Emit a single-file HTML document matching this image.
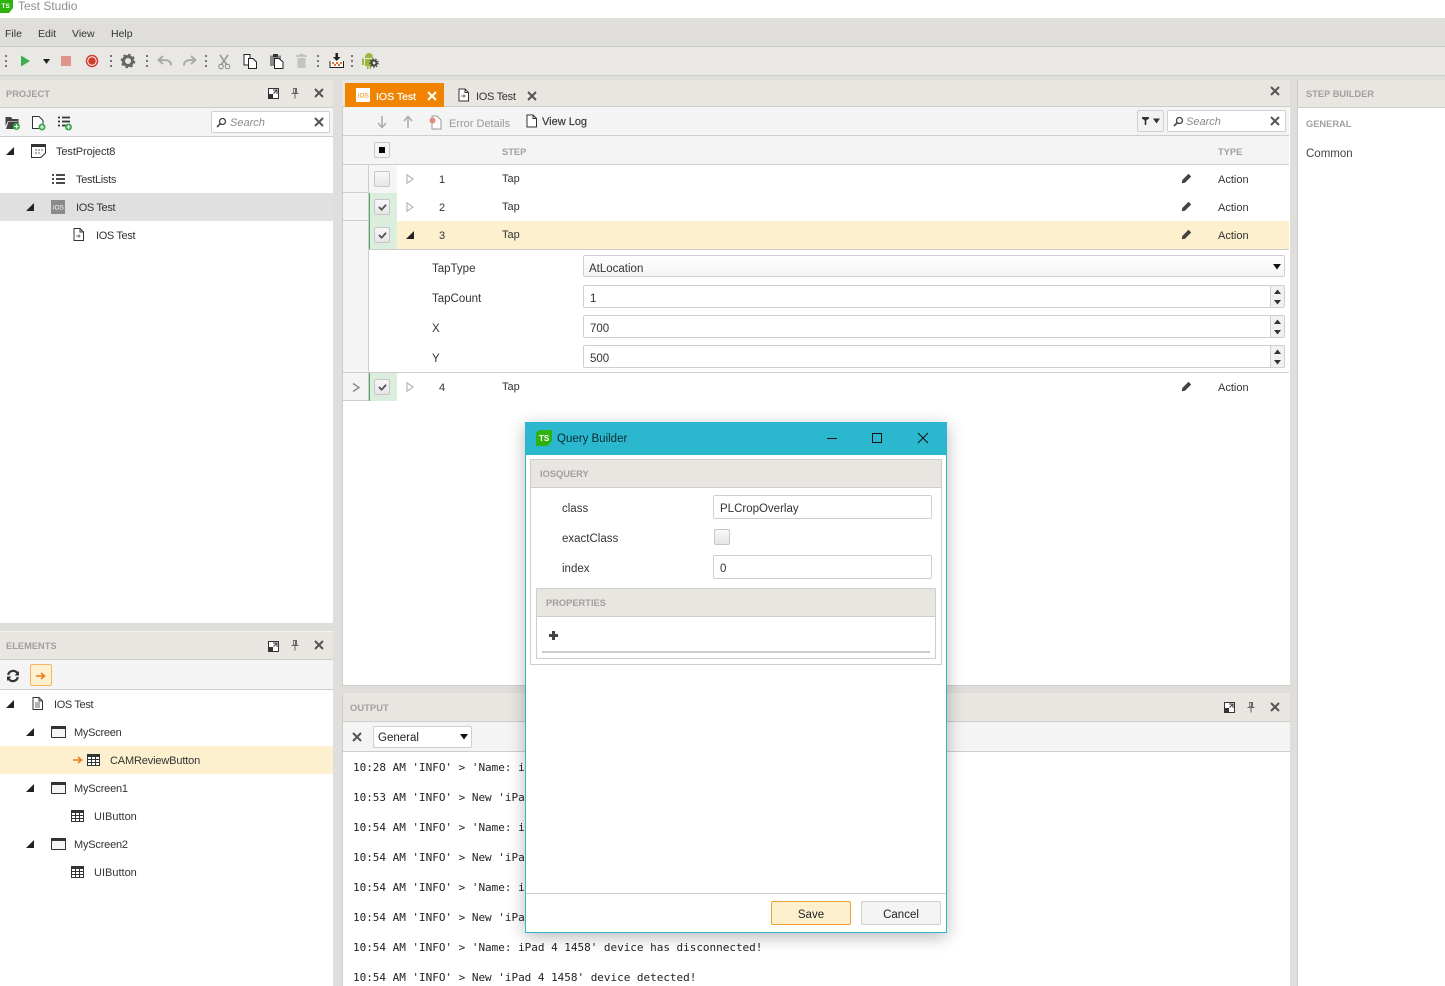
<!DOCTYPE html>
<html><head><meta charset="utf-8"><title>Test Studio</title>
<style>
html,body{margin:0;padding:0}
body{width:1445px;height:986px;position:relative;overflow:hidden;background:#dfdeda;font-family:"Liberation Sans",sans-serif;font-size:11px;color:#333}
.b{position:absolute;box-sizing:border-box}
.t{position:absolute;white-space:pre;line-height:14px;height:14px;margin-top:2px}
.h{font-weight:bold;font-size:9.3px;color:#a0a0a0;margin-top:1px}
.m{font-family:"DejaVu Sans Mono","Liberation Mono",monospace;font-size:11px;color:#222;letter-spacing:-.02px}
.i{position:absolute;overflow:visible}
.cb{position:absolute;box-sizing:border-box;width:16px;height:16px;border:1px solid #c6c6c6;border-radius:2px;background:linear-gradient(#f8f8f8,#e6e6e6)}
.inp{position:absolute;box-sizing:border-box;background:#fff;border:1px solid #cfcfcf;border-radius:2px}
</style></head>
<body>
<svg width="0" height="0" style="position:absolute">
<defs>
<symbol id="x" viewBox="0 0 10 10"><path d="M1 1L9 9M9 1L1 9" stroke="#555" stroke-width="2" fill="none"/></symbol>
<symbol id="tri" viewBox="0 0 8 8"><path d="M0 8L8 8L8 0Z" fill="#222"/></symbol>
<symbol id="open" viewBox="0 0 8 10"><path d="M1 .8L7 5L1 9.200Z" fill="#fff" stroke="#aaa"/></symbol>
<symbol id="chk" viewBox="0 0 10 8"><path d="M1 4L4 7L9 1.500" stroke="#555" stroke-width="2" fill="none"/></symbol>
<symbol id="pin" viewBox="0 0 10 12"><path d="M3 1H7V6H8.500V7H1.500V6H3ZM4.500 7H5.500V11.500H4.500Z" fill="#666"/><path d="M4.300 2V5.500" stroke="#fff"/></symbol>
<symbol id="pop" viewBox="0 0 11 11"><rect width="11" height="11" fill="#fff"/><rect x=".5" y=".5" width="10" height="10" fill="#fff" stroke="#333"/><rect x="1" y="6" width="4" height="4" fill="#333"/><path d="M5 2H9V6M9 2L5.500 5.500" stroke="#333" fill="none"/></symbol>
<symbol id="pencil" viewBox="0 0 11 11"><path d="M7.500 .8L10.200 3.500L4 9.700L.8 10.200L1.300 7Z" fill="#444"/></symbol>
<symbol id="grid" viewBox="0 0 13 12"><path d="M.5.5H12.500V11.500H.5Z" fill="#fff" stroke="#333"/><path d="M0 1H13V3H0Z" fill="#333"/><path d="M.5 5.500H12.500M.5 8.500H12.500M4.500 2V11.500M8.500 2V11.500" stroke="#333"/></symbol>
<symbol id="win" viewBox="0 0 15 12"><path d="M.5.5H14.500V11.500H.5Z" fill="#f4f4f4" stroke="#333"/><path d="M0 1H15V3H0Z" fill="#333"/></symbol>
<symbol id="doc" viewBox="0 0 11 13"><path d="M1 .5H7L10.500 4V12.500H1Z" fill="#fff" stroke="#333"/><path d="M7 .5V4H10.500" fill="none" stroke="#333"/></symbol>
</defs>
</svg>

<!-- title bar -->
<div class="b" style="left:0;top:0;width:1445px;height:18px;background:#fff"></div>
<svg class="i" style="left:0;top:0" width="13" height="13"><path d="M0 0H13V8L9 13H0Z" fill="#2eb20e"/><text x="1.500" y="8" font-size="6.500" font-weight="bold" fill="#fff" font-family="Liberation Sans">TS</text></svg>
<div class="t" style="left:18px;top:-3px;font-size:12px;color:#8e8e8e">Test Studio</div>

<!-- menu -->
<div class="b" style="left:0;top:18px;width:1445px;height:29px;background:#dfdeda;border-bottom:1px solid #c9c9c6"></div>
<div class="t" style="left:5px;top:25px;font-size:10.500px">File</div>
<div class="t" style="left:38px;top:25px;font-size:10.500px">Edit</div>
<div class="t" style="left:72px;top:25px;font-size:10.500px">View</div>
<div class="t" style="left:111px;top:25px;font-size:10.500px">Help</div>

<!-- toolbar -->
<div class="b" style="left:0;top:47px;width:1445px;height:29px;background:#e9e8e4;border-bottom:1px solid #cfcfcc"></div>
<svg class="i" style="left:0;top:47px" width="400" height="29">
<g fill="#777"><rect x="5" y="8" width="2" height="2"/><rect x="5" y="13" width="2" height="2"/><rect x="5" y="18" width="2" height="2"/>
<rect x="110" y="8" width="2" height="2"/><rect x="110" y="13" width="2" height="2"/><rect x="110" y="18" width="2" height="2"/>
<rect x="146" y="8" width="2" height="2"/><rect x="146" y="13" width="2" height="2"/><rect x="146" y="18" width="2" height="2"/>
<rect x="205" y="8" width="2" height="2"/><rect x="205" y="13" width="2" height="2"/><rect x="205" y="18" width="2" height="2"/>
<rect x="317" y="8" width="2" height="2"/><rect x="317" y="13" width="2" height="2"/><rect x="317" y="18" width="2" height="2"/>
<rect x="351" y="8" width="2" height="2"/><rect x="351" y="13" width="2" height="2"/><rect x="351" y="18" width="2" height="2"/></g>
<path d="M21 8.500L30 14L21 19.500Z" fill="#3dae4b"/>
<path d="M43 12H50L46.500 17Z" fill="#222"/>
<rect x="61" y="9" width="10" height="10" fill="#e0958c"/>
<circle cx="92" cy="14" r="5.500" fill="#fff" stroke="#d13c2b" stroke-width="1.500"/><circle cx="92" cy="14" r="3.800" fill="#d13c2b"/>
<circle cx="128" cy="14" r="4.500" fill="none" stroke="#666" stroke-width="3"/><circle cx="128" cy="14" r="6.500" fill="none" stroke="#666" stroke-width="1.600" stroke-dasharray="2.500 2.600"/>
<path d="M171 18.500C171 13 167 13 159 13M163 9L158.500 13L163 17" fill="none" stroke="#aaa" stroke-width="2"/>
<path d="M184 18.500C184 13 188 13 195 13M191 9L195.500 13L191 17" fill="none" stroke="#aaa" stroke-width="2"/>
<path d="M220 8L227 18M228 8L221 18" stroke="#999" stroke-width="1.600" fill="none"/><circle cx="221" cy="19.500" r="2.300" fill="none" stroke="#888"/><circle cx="227.500" cy="19.500" r="2.300" fill="none" stroke="#888"/>
<path d="M244 7.500H250V18H244Z" fill="#fff" stroke="#222"/><path d="M248.500 11.500H253L256.500 15V21.500H248.500Z" fill="#fff" stroke="#222"/>
<path d="M270 8.500H281V19H270Z" fill="#8a8a8a"/><rect x="273" y="7" width="5" height="3" fill="#333"/><path d="M274.500 11.500H279L283 15V21.500H274.500Z" fill="#fff" stroke="#222"/>
<path d="M296 9H307M300 7.500H303" stroke="#bbb" stroke-width="1.500"/><path d="M297.500 11H305.500V21H297.500Z" fill="#c2c2c2"/>
<path d="M330 14V20.500H343.500V14" fill="#fff" stroke="#222"/><path d="M335.500 6H338V10H340.500L336.700 14L333 10H335.500Z" fill="#222"/><g fill="#ee6b1f"><rect x="332" y="15" width="2" height="2"/><rect x="336" y="15" width="2" height="2"/><rect x="340" y="15" width="2" height="2"/><rect x="334" y="17" width="2" height="2"/><rect x="338" y="17" width="2" height="2"/></g>
<path d="M365 10A4 4 0 0 1 373 10V11H365ZM362 11.500H364V18H362ZM365 12H373V19H371V22H369.500V19H368.500V22H367V19H365Z" fill="#9bb83c"/>
<circle cx="374" cy="16" r="2.500" fill="none" stroke="#444" stroke-width="2"/><circle cx="374" cy="16" r="4.200" fill="none" stroke="#444" stroke-width="1.200" stroke-dasharray="1.500 1.500"/>
</svg>

<!-- PROJECT PANEL -->
<div class="b" style="left:0;top:80px;width:333px;height:28px;background:#e9e6e2;border-bottom:1px solid #cdcdcd"></div>
<div class="t h" style="left:6px;top:86px">PROJECT</div>
<svg class="i" style="left:268px;top:88px" width="11" height="11"><use href="#pop"/></svg>
<svg class="i" style="left:290px;top:87px" width="10" height="12"><use href="#pin"/></svg>
<svg class="i" style="left:314px;top:88px" width="10" height="10"><use href="#x"/></svg>
<div class="b" style="left:0;top:108px;width:333px;height:29px;background:#f4f4f4;border-bottom:1px solid #cdcdcd"></div>
<svg class="i" style="left:0;top:108px" width="80" height="29">
<path d="M5.500 9H11L12.500 11H18.500V13H8L5.500 18Z" fill="#444"/><path d="M6 21L8.500 13.500H19L17 21Z" fill="#444"/><circle cx="16.500" cy="18.500" r="3.500" fill="#3dae4b"/><path d="M14.500 18.500H18.500M16.500 16.500V20.500" stroke="#fff"/>
<path d="M32.500 8.500H39L43 12.500V20.500H32.500Z" fill="#fff" stroke="#333"/><circle cx="42" cy="19" r="3.500" fill="#3dae4b"/><path d="M40 19H44M42 17V21" stroke="#fff"/>
<path d="M58 9.500H60M62 9.500H70M58 13.500H60M62 13.500H70M58 17.500H60M62 17.500H66" stroke="#333" stroke-width="1.700"/><circle cx="68.500" cy="19" r="3.500" fill="#3dae4b"/><path d="M66.500 19H70.500M68.500 17V21" stroke="#fff"/>
</svg>
<div class="inp" style="left:211px;top:111px;width:119px;height:22px"></div>
<svg class="i" style="left:216px;top:117px" width="11" height="11"><circle cx="6.500" cy="4.500" r="3" fill="none" stroke="#444" stroke-width="1.300"/><path d="M4.500 6.500L1 10" stroke="#444" stroke-width="1.600"/></svg>
<div class="t" style="left:230px;top:114px;font-style:italic;color:#8a8a8a">Search</div>
<svg class="i" style="left:314px;top:117px" width="10" height="10"><use href="#x"/></svg>

<div class="b" style="left:0;top:137px;width:333px;height:486px;background:#fff"></div>
<div class="b" style="left:0;top:193px;width:333px;height:28px;background:#e0e0e0"></div>
<svg class="i" style="left:6px;top:147px" width="8" height="8"><use href="#tri"/></svg>
<svg class="i" style="left:31px;top:144px" width="15" height="14"><path d="M.5.500H14.500V9L10 13.500H.5Z" fill="#fff" stroke="#333"/><path d="M0 0H15V3H0Z" fill="#333"/><path d="M4 6H6M7 6H9M10 6H12M4 9H6M7 9H9" stroke="#666"/></svg>
<div class="t" style="left:56px;top:143px;letter-spacing:-.1px">TestProject8</div>
<svg class="i" style="left:52px;top:173px" width="13" height="12"><path d="M0 2H2M4 2H13M0 6H2M4 6H13M0 10H2M4 10H13" stroke="#333" stroke-width="1.700"/></svg>
<div class="t" style="left:76px;top:171px;letter-spacing:-.3px">TestLists</div>
<svg class="i" style="left:26px;top:203px" width="8" height="8"><use href="#tri"/></svg>
<svg class="i" style="left:51px;top:200px" width="14" height="14"><rect width="14" height="14" fill="#8a8a8a"/><text x="2" y="9.500" font-size="6.500" fill="#fff" font-family="Liberation Sans">iOS</text></svg>
<div class="t" style="left:76px;top:199px;letter-spacing:-.35px">IOS Test</div>
<svg class="i" style="left:73px;top:228px" width="11" height="13"><use href="#doc"/><path d="M3 8H7M5.500 6.500L7 8L5.500 9.500" stroke="#777" fill="none"/></svg>
<div class="t" style="left:96px;top:227px;letter-spacing:-.35px">IOS Test</div>

<!-- ELEMENTS PANEL -->
<div class="b" style="left:0;top:631px;width:333px;height:29px;background:#e9e6e2;border-top:1px solid #f4f4f4;border-bottom:1px solid #cdcdcd"></div>
<div class="t h" style="left:6px;top:638px">ELEMENTS</div>
<svg class="i" style="left:268px;top:641px" width="11" height="11"><use href="#pop"/></svg>
<svg class="i" style="left:290px;top:639px" width="10" height="12"><use href="#pin"/></svg>
<svg class="i" style="left:314px;top:640px" width="10" height="10"><use href="#x"/></svg>
<div class="b" style="left:0;top:660px;width:333px;height:30px;background:#f4f4f4;border-bottom:1px solid #cdcdcd"></div>
<svg class="i" style="left:7px;top:670px" width="12" height="12"><path d="M10.500 3.500A5 5 0 0 0 1.200 5M1.500 8.500A5 5 0 0 0 10.800 7" fill="none" stroke="#333" stroke-width="2.200"/><path d="M12 1V5.500H7.500ZM0 11V6.500H4.500Z" fill="#333"/></svg>
<div class="b" style="left:30px;top:664px;width:22px;height:22px;background:#fdf0cf;border:1px solid #f3b562;border-radius:2px"></div>
<svg class="i" style="left:36px;top:672px" width="10" height="8"><path d="M0 4H8M5 1L8.500 4L5 7" fill="none" stroke="#ec7a22" stroke-width="1.500"/></svg>

<div class="b" style="left:0;top:690px;width:333px;height:296px;background:#fff"></div>
<div class="b" style="left:0;top:746px;width:333px;height:28px;background:#fdf0cf"></div>
<svg class="i" style="left:6px;top:700px" width="8" height="8"><use href="#tri"/></svg>
<svg class="i" style="left:32px;top:697px" width="11" height="13"><use href="#doc"/><path d="M3 6H8M3 8H8M3 10H8" stroke="#666"/></svg>
<div class="t" style="left:54px;top:696px;letter-spacing:-.35px">IOS Test</div>
<svg class="i" style="left:26px;top:728px" width="8" height="8"><use href="#tri"/></svg>
<svg class="i" style="left:51px;top:726px" width="15" height="12"><use href="#win"/></svg>
<div class="t" style="left:74px;top:724px;letter-spacing:-.25px">MyScreen</div>
<svg class="i" style="left:73px;top:756px" width="9" height="8"><path d="M0 4H8M5 1L8.500 4L5 7" fill="none" stroke="#ec7a22" stroke-width="1.500"/></svg>
<svg class="i" style="left:87px;top:754px" width="13" height="12"><use href="#grid"/></svg>
<div class="t" style="left:110px;top:752px;letter-spacing:-.15px">CAMReviewButton</div>
<svg class="i" style="left:26px;top:784px" width="8" height="8"><use href="#tri"/></svg>
<svg class="i" style="left:51px;top:782px" width="15" height="12"><use href="#win"/></svg>
<div class="t" style="left:74px;top:780px;letter-spacing:-.2px">MyScreen1</div>
<svg class="i" style="left:71px;top:810px" width="13" height="12"><use href="#grid"/></svg>
<div class="t" style="left:94px;top:808px">UIButton</div>
<svg class="i" style="left:26px;top:840px" width="8" height="8"><use href="#tri"/></svg>
<svg class="i" style="left:51px;top:838px" width="15" height="12"><use href="#win"/></svg>
<div class="t" style="left:74px;top:836px;letter-spacing:-.2px">MyScreen2</div>
<svg class="i" style="left:71px;top:866px" width="13" height="12"><use href="#grid"/></svg>
<div class="t" style="left:94px;top:864px">UIButton</div>

<!-- CENTER PANEL -->
<div class="b" style="left:342px;top:80px;width:948px;height:606px;background:#fff;border-left:1px solid #cdcdcd;border-bottom:1px solid #cdcdcd"></div>
<div class="b" style="left:342px;top:80px;width:948px;height:27px;background:#e9e6e2;border-bottom:1px solid #cdcdcd"></div>
<div class="b" style="left:345px;top:83px;width:99px;height:24px;background:#f08300"></div>
<svg class="i" style="left:356px;top:88px" width="14" height="14"><rect width="14" height="14" fill="#fff"/><text x="2" y="9.500" font-size="6.500" fill="#f08300" font-family="Liberation Sans">iOS</text></svg>
<div class="t" style="left:376px;top:88px;color:#fff;font-size:10.500px;-webkit-text-stroke:.2px #fff">IOS Test</div>
<svg class="i" style="left:427px;top:91px" width="10" height="10"><path d="M1 1L9 9M9 1L1 9" stroke="#fff" stroke-width="2"/></svg>
<svg class="i" style="left:458px;top:88px" width="11" height="14"><use href="#doc"/><path d="M3 8H7M5.500 6.500L7 8L5.500 9.500" stroke="#777" fill="none"/></svg>
<div class="t" style="left:476px;top:88px;letter-spacing:-.3px">IOS Test</div>
<svg class="i" style="left:527px;top:91px" width="10" height="10"><use href="#x"/></svg>
<svg class="i" style="left:1270px;top:86px" width="10" height="10"><use href="#x"/></svg>

<div class="b" style="left:343px;top:107px;width:946px;height:29px;background:#f4f4f4;border-bottom:1px solid #cdcdcd"></div>
<svg class="i" style="left:377px;top:116px" width="10" height="13"><path d="M5 0V11M1 7L5 11.500L9 7" fill="none" stroke="#aaa" stroke-width="1.500"/></svg>
<svg class="i" style="left:403px;top:116px" width="10" height="13"><path d="M5 12V1M1 5L5 .5L9 5" fill="none" stroke="#aaa" stroke-width="1.500"/></svg>
<svg class="i" style="left:429px;top:115px" width="15" height="15"><path d="M3 1H8L12 5V14H3Z" fill="#fff" stroke="#999"/><circle cx="3.500" cy="5.500" r="3" fill="#e58a80"/></svg>
<div class="t" style="left:449px;top:115px;color:#999">Error Details</div>
<svg class="i" style="left:526px;top:114px" width="11" height="14"><use href="#doc"/></svg>
<div class="t" style="left:542px;top:113px;-webkit-text-stroke:.15px #333">View Log</div>
<div class="inp" style="left:1137px;top:110px;width:27px;height:22px;background:#f2f2f2"></div>
<svg class="i" style="left:1142px;top:117px" width="20" height="8"><path d="M0 0H7V1.500L4.300 3.500V8H2.700V3.500L0 1.500ZM11 1.500H18L14.500 6.500Z" fill="#333"/></svg>
<div class="inp" style="left:1167px;top:110px;width:119px;height:22px"></div>
<svg class="i" style="left:1173px;top:116px" width="11" height="11"><circle cx="6.500" cy="4.500" r="3" fill="none" stroke="#444" stroke-width="1.300"/><path d="M4.500 6.500L1 10" stroke="#444" stroke-width="1.600"/></svg>
<div class="t" style="left:1186px;top:113px;font-style:italic;color:#8a8a8a">Search</div>
<svg class="i" style="left:1270px;top:116px" width="10" height="10"><use href="#x"/></svg>

<!-- grid header -->
<div class="b" style="left:343px;top:136px;width:946px;height:29px;background:#f4f4f4;border-bottom:1px solid #cdcdcd"></div>
<div class="cb" style="left:374px;top:142px;background:#f4f4f4"></div>
<div class="b" style="left:379px;top:147px;width:6px;height:6px;background:#000"></div>
<div class="t h" style="left:502px;top:144px">STEP</div>
<div class="t h" style="left:1218px;top:144px">TYPE</div>

<!-- gutters -->
<div class="b" style="left:343px;top:165px;width:26px;height:208px;background:#f4f4f4;border-right:1px solid #cdcdcd"></div>
<div class="b" style="left:343px;top:192px;width:26px;height:1px;background:#cdcdcd"></div>
<div class="b" style="left:343px;top:220px;width:26px;height:1px;background:#cdcdcd"></div>
<div class="b" style="left:369px;top:165px;width:28px;height:28px;background:#f5f5f5"></div>
<div class="b" style="left:369px;top:193px;width:28px;height:56px;background:#dbeedd;border-left:1px solid #51a862"></div>
<div class="b" style="left:397px;top:221px;width:892px;height:28px;background:#fdf0cf"></div>
<div class="b" style="left:369px;top:249px;width:920px;height:1px;background:#cdcdcd"></div>

<div class="cb" style="left:374px;top:171px"></div>
<div class="cb" style="left:374px;top:199px"></div><svg class="i" style="left:378px;top:203px" width="9" height="8"><use href="#chk"/></svg>
<div class="cb" style="left:374px;top:227px"></div><svg class="i" style="left:378px;top:231px" width="9" height="8"><use href="#chk"/></svg>

<svg class="i" style="left:406px;top:174px" width="8" height="10"><use href="#open"/></svg>
<svg class="i" style="left:406px;top:202px" width="8" height="10"><use href="#open"/></svg>
<svg class="i" style="left:406px;top:231px" width="8" height="8"><use href="#tri"/></svg>

<div class="t" style="left:439px;top:171px">1</div><div class="t" style="left:502px;top:170px">Tap</div>
<div class="t" style="left:439px;top:199px">2</div><div class="t" style="left:502px;top:198px">Tap</div>
<div class="t" style="left:439px;top:227px">3</div><div class="t" style="left:502px;top:226px">Tap</div>
<svg class="i" style="left:1181px;top:173px" width="11" height="11"><use href="#pencil"/></svg>
<svg class="i" style="left:1181px;top:201px" width="11" height="11"><use href="#pencil"/></svg>
<svg class="i" style="left:1181px;top:229px" width="11" height="11"><use href="#pencil"/></svg>
<div class="t" style="left:1218px;top:171px">Action</div>
<div class="t" style="left:1218px;top:199px">Action</div>
<div class="t" style="left:1218px;top:227px">Action</div>

<!-- expanded -->
<div class="t" style="left:432px;top:260px;font-size:11.500px">TapType</div>
<div class="t" style="left:432px;top:290px;font-size:11.500px">TapCount</div>
<div class="t" style="left:432px;top:320px;font-size:11.500px">X</div>
<div class="t" style="left:432px;top:350px;font-size:11.500px">Y</div>
<div class="inp" style="left:583px;top:255px;width:702px;height:22px;background:linear-gradient(#fff,#f4f4f4)"></div>
<div class="t" style="left:589px;top:260px;font-size:11.500px">AtLocation</div>
<svg class="i" style="left:1273px;top:264px" width="8" height="6"><path d="M0 0H8L4 5.500Z" fill="#111"/></svg>
<div class="inp" style="left:583px;top:285px;width:702px;height:23px"></div>
<div class="inp" style="left:583px;top:315px;width:702px;height:23px"></div>
<div class="inp" style="left:583px;top:345px;width:702px;height:23px"></div>
<div class="t" style="left:590px;top:290px;font-size:11.500px">1</div>
<div class="t" style="left:590px;top:320px;font-size:11.500px">700</div>
<div class="t" style="left:590px;top:350px;font-size:11.500px">500</div>
<div class="b" style="left:1270px;top:286px;width:14px;height:21px;background:#f1f1f1;border-left:1px solid #cfcfcf"></div>
<div class="b" style="left:1270px;top:316px;width:14px;height:21px;background:#f1f1f1;border-left:1px solid #cfcfcf"></div>
<div class="b" style="left:1270px;top:346px;width:14px;height:21px;background:#f1f1f1;border-left:1px solid #cfcfcf"></div>
<svg class="i" style="left:1270px;top:285px" width="14" height="84">
<g fill="#333"><path d="M4 9L7.500 4.500L11 9Z"/><path d="M4 15H11L7.500 19.500Z"/><path d="M4 39L7.500 34.500L11 39Z"/><path d="M4 45H11L7.500 49.500Z"/><path d="M4 69L7.500 64.500L11 69Z"/><path d="M4 75H11L7.500 79.500Z"/></g>
</svg>

<div class="b" style="left:343px;top:372px;width:946px;height:1px;background:#cdcdcd"></div>
<!-- row 4 -->
<div class="b" style="left:343px;top:373px;width:26px;height:28px;background:#f4f4f4;border-right:1px solid #cdcdcd;border-bottom:1px solid #cdcdcd"></div>
<div class="b" style="left:369px;top:373px;width:28px;height:28px;background:#dbeedd;border-left:1px solid #51a862"></div>
<svg class="i" style="left:352px;top:383px" width="8" height="9"><path d="M1 .5L7 4.500L1 8.500" fill="none" stroke="#888" stroke-width="1.400"/></svg>
<div class="cb" style="left:374px;top:379px"></div><svg class="i" style="left:378px;top:383px" width="9" height="8"><use href="#chk"/></svg>
<svg class="i" style="left:406px;top:382px" width="8" height="10"><use href="#open"/></svg>
<div class="t" style="left:439px;top:379px">4</div><div class="t" style="left:502px;top:378px">Tap</div>
<svg class="i" style="left:1181px;top:381px" width="11" height="11"><use href="#pencil"/></svg>
<div class="t" style="left:1218px;top:379px">Action</div>

<!-- OUTPUT -->
<div class="b" style="left:342px;top:693px;width:948px;height:293px;background:#fff;border-left:1px solid #cdcdcd"></div>
<div class="b" style="left:343px;top:693px;width:947px;height:29px;background:#e9e6e2;border-bottom:1px solid #cdcdcd"></div>
<div class="t h" style="left:350px;top:700px;letter-spacing:.1px">OUTPUT</div>
<svg class="i" style="left:1224px;top:702px" width="11" height="11"><use href="#pop"/></svg>
<svg class="i" style="left:1246px;top:701px" width="10" height="12"><use href="#pin"/></svg>
<svg class="i" style="left:1270px;top:702px" width="10" height="10"><use href="#x"/></svg>
<div class="b" style="left:343px;top:722px;width:947px;height:30px;background:#f4f4f4;border-bottom:1px solid #cdcdcd"></div>
<svg class="i" style="left:352px;top:732px" width="10" height="10"><use href="#x"/></svg>
<div class="inp" style="left:373px;top:726px;width:99px;height:22px"></div>
<div class="t" style="left:378px;top:729px;font-size:11.500px;color:#222">General</div>
<svg class="i" style="left:460px;top:734px" width="8" height="6"><path d="M0 0H8L4 5.500Z" fill="#111"/></svg>
<div class="t m" style="left:353px;top:759px">10:28 AM 'INFO' &gt; 'Name: iPad 4 1458' device has disconnected!</div>
<div class="t m" style="left:353px;top:789px">10:53 AM 'INFO' &gt; New 'iPad 4 1458' device detected!</div>
<div class="t m" style="left:353px;top:819px">10:54 AM 'INFO' &gt; 'Name: iPad 4 1458' device has disconnected!</div>
<div class="t m" style="left:353px;top:849px">10:54 AM 'INFO' &gt; New 'iPad 4 1458' device detected!</div>
<div class="t m" style="left:353px;top:879px">10:54 AM 'INFO' &gt; 'Name: iPad 4 1458' device has disconnected!</div>
<div class="t m" style="left:353px;top:909px">10:54 AM 'INFO' &gt; New 'iPad 4 1458' device detected!</div>
<div class="t m" style="left:353px;top:939px">10:54 AM 'INFO' &gt; 'Name: iPad 4 1458' device has disconnected!</div>
<div class="t m" style="left:353px;top:969px">10:54 AM 'INFO' &gt; New 'iPad 4 1458' device detected!</div>

<!-- RIGHT -->
<div class="b" style="left:1297px;top:80px;width:148px;height:906px;background:#fff;border-left:1px solid #cdcdcd"></div>
<div class="b" style="left:1297px;top:80px;width:148px;height:28px;background:#e9e6e2;border-bottom:1px solid #cdcdcd;border-left:1px solid #cdcdcd"></div>
<div class="t h" style="left:1306px;top:86px">STEP BUILDER</div>
<div class="t h" style="left:1306px;top:116px">GENERAL</div>
<div class="t" style="left:1306px;top:145px;font-size:11.500px;color:#444">Common</div>

<!-- DIALOG -->
<div class="b" style="left:525px;top:422px;width:422px;height:511px;background:#fff;border:1px solid #2bb8ce;box-shadow:0 4px 16px rgba(0,0,0,.28)"></div>
<div class="b" style="left:525px;top:422px;width:422px;height:33px;background:#2bb8ce"></div>
<svg class="i" style="left:536px;top:430px" width="16" height="16"><path d="M3 0H16V11L11 16H0V3Z" fill="#2eb20e"/><text x="3" y="11" font-size="8" font-weight="bold" fill="#fff" font-family="Liberation Sans">TS</text></svg>
<div class="t" style="left:557px;top:430px;font-size:11.500px;color:#0b2b33">Query Builder</div>
<svg class="i" style="left:825px;top:430px" width="110" height="16">
<path d="M2 8.500H12" stroke="#111"/><path d="M47.500 3.500H56.500V12.500H47.500Z" fill="none" stroke="#111"/><path d="M93 3L103 13M103 3L93 13" stroke="#111" fill="none"/>
</svg>
<div class="b" style="left:530px;top:459px;width:412px;height:206px;border:1px solid #cdcdcd"></div>
<div class="b" style="left:531px;top:460px;width:410px;height:28px;background:#e9e6e2;border-bottom:1px solid #cdcdcd"></div>
<div class="t h" style="left:540px;top:466px">IOSQUERY</div>
<div class="t" style="left:562px;top:500px;font-size:11.500px">class</div>
<div class="t" style="left:562px;top:530px;font-size:11.500px">exactClass</div>
<div class="t" style="left:562px;top:560px;font-size:11.500px">index</div>
<div class="inp" style="left:713px;top:495px;width:219px;height:24px"></div>
<div class="t" style="left:720px;top:500px;font-size:11.500px">PLCropOverlay</div>
<div class="cb" style="left:714px;top:529px"></div>
<div class="inp" style="left:713px;top:555px;width:219px;height:24px"></div>
<div class="t" style="left:720px;top:560px;font-size:11.500px">0</div>
<div class="b" style="left:536px;top:588px;width:400px;height:71px;border:1px solid #cdcdcd"></div>
<div class="b" style="left:537px;top:589px;width:398px;height:28px;background:#e9e6e2;border-bottom:1px solid #cdcdcd"></div>
<div class="t h" style="left:546px;top:595px">PROPERTIES</div>
<svg class="i" style="left:549px;top:631px" width="9" height="9"><path d="M3 0H6V3H9V6H6V9H3V6H0V3H3Z" fill="#444"/></svg>
<div class="b" style="left:542px;top:651px;width:388px;height:2px;background:#cdcdcd"></div>
<div class="b" style="left:526px;top:893px;width:420px;height:1px;background:#cdcdcd"></div>
<div class="b" style="left:771px;top:901px;width:80px;height:24px;background:#fdf0cf;border:1px solid #f0a030;border-radius:2px"></div>
<div class="t" style="left:771px;top:906px;width:80px;text-align:center;font-size:11.500px;color:#222">Save</div>
<div class="b" style="left:861px;top:901px;width:80px;height:24px;background:#f4f4f4;border:1px solid #cdcdcd;border-radius:2px"></div>
<div class="t" style="left:861px;top:906px;width:80px;text-align:center;font-size:11.500px;color:#222">Cancel</div>
</body></html>
